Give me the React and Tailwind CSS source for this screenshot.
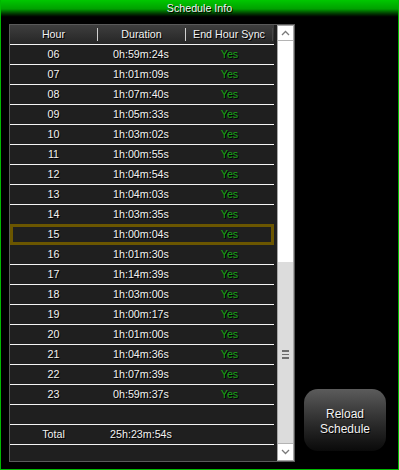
import React from 'react';

const rows = [
  ['06', '0h:59m:24s'],
  ['07', '1h:01m:09s'],
  ['08', '1h:07m:40s'],
  ['09', '1h:05m:33s'],
  ['10', '1h:03m:02s'],
  ['11', '1h:00m:55s'],
  ['12', '1h:04m:54s'],
  ['13', '1h:04m:03s'],
  ['14', '1h:03m:35s'],
  ['15', '1h:00m:04s'],
  ['16', '1h:01m:30s'],
  ['17', '1h:14m:39s'],
  ['18', '1h:03m:00s'],
  ['19', '1h:00m:17s'],
  ['20', '1h:01m:00s'],
  ['21', '1h:04m:36s'],
  ['22', '1h:07m:39s'],
  ['23', '0h:59m:37s'],
];

const shadow = '[text-shadow:1px_1px_0_#000]';

function Row({ hour, duration, sync, selected }) {
  return (
    <div className="relative flex h-[20px] border-b border-[#f4f4f4] items-center">
      <div className="w-[87px] text-center">{hour}</div>
      <div className="w-[88px] text-center">{duration}</div>
      <div className="w-[89px] text-center text-[#17a317]">{sync}</div>
      {selected && (
        <div className="absolute left-0 right-0 top-[-1px] bottom-[-1px] border-[3px] border-[#6b5600]" />
      )}
    </div>
  );
}

function Chevron({ up }) {
  return (
    <svg width="9" height="6" viewBox="0 0 9 6">
      <polyline
        points={up ? '1,5 4.5,1.5 8,5' : '1,1 4.5,4.5 8,1'}
        fill="none"
        stroke="#7a7a7a"
        strokeWidth="1.3"
      />
    </svg>
  );
}

export default function App() {
  return (
    <div className={`w-[399px] h-[470px] bg-black border-l border-r border-b border-[#00b800] flex flex-col font-['Liberation_Sans',Arial,sans-serif] text-[10.7px] text-[#f2f2f2] ${shadow}`}>
      {/* title bar */}
      <div className="h-[18px] bg-gradient-to-b from-[#00c800] via-[#00a000] to-black flex items-center justify-center pb-[1px]">
        Schedule Info
      </div>

      <div className="flex items-start mt-[6px] ml-[8px]">
        {/* table panel */}
        <div className="flex h-[438px] border border-[#5a5a5a] bg-[#1f1f1f]">
          <div className="w-[264px] flex flex-col">
            <div className="flex h-[20px] items-center border-b border-[#f4f4f4] bg-gradient-to-b from-[#3e3e3e] to-[#262626]">
              <div className="w-[87px] text-center">Hour</div>
              <div className="w-[1px] h-[13px] bg-[#d0d0d0]" />
              <div className="w-[87px] text-center">Duration</div>
              <div className="w-[1px] h-[13px] bg-[#d0d0d0]" />
              <div className="w-[86px] text-center">End Hour Sync</div>
              <div className="w-[1px] h-[13px] bg-[#474747]" />
            </div>
            {rows.map(([h, d]) => (
              <Row key={h} hour={h} duration={d} sync="Yes" selected={h === '15'} />
            ))}
            <Row hour="" duration="" sync="" />
            <Row hour="Total" duration="25h:23m:54s" sync="" />
          </div>

          {/* scrollbar */}
          <div className="ml-[3px] w-[17px] flex flex-col border border-[#a6a6a6] bg-white">
            <div className="h-[15px] border-b border-[#b4b4b4] flex items-center justify-center">
              <Chevron up />
            </div>
            <div className="flex-1 flex flex-col justify-end">
              <div className="h-[181px] bg-[#dcdcdc] flex flex-col items-center justify-center gap-[2px] pt-[4px]">
                <div className="w-[7px] h-[1.5px] bg-[#6e6e6e]" />
                <div className="w-[7px] h-[1.5px] bg-[#6e6e6e]" />
                <div className="w-[7px] h-[1.5px] bg-[#6e6e6e]" />
              </div>
            </div>
            <div className="h-[17px] border-t border-[#b4b4b4] flex items-center justify-center">
              <Chevron />
            </div>
          </div>
        </div>

        {/* reload button */}
        <div className="h-[438px] flex flex-col justify-end pb-[11px] ml-[9px]">
          <button
            type="button"
            className={`w-[82px] h-[62px] pt-[3px] rounded-[14px] bg-gradient-to-b from-[#5c5c5c] to-[#0a0a0a] text-[12px] leading-[15px] text-[#f2f2f2] ${shadow}`}
          >
            Reload
            <br />
            Schedule
          </button>
        </div>
      </div>
    </div>
  );
}
